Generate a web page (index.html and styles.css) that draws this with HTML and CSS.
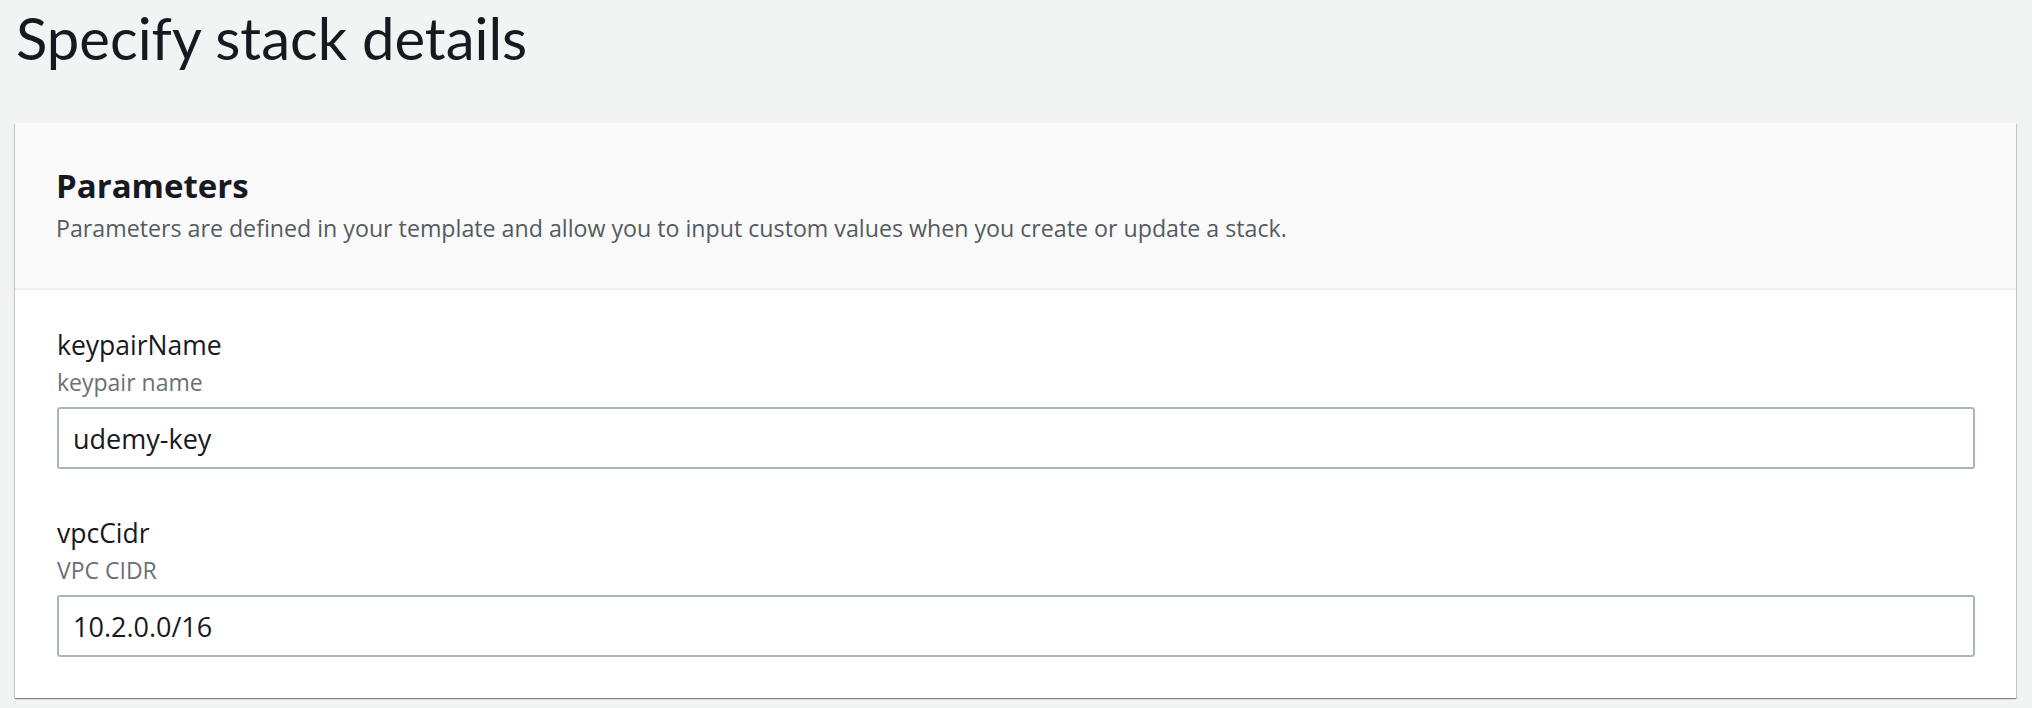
FILE: index.html
```html
<!DOCTYPE html>
<html lang="en">
<head>
<meta charset="utf-8">
<title>Specify stack details</title>
<link rel="stylesheet" href="styles.css">
</head>
<body>
<main class="page">
  <h1 class="page-title">Specify stack details</h1>
  <section class="card">
    <header class="card-header">
      <h2 class="card-title">Parameters</h2>
      <p class="card-desc">Parameters are defined in your template and allow you to input custom values when you create or update a stack.</p>
    </header>
    <div class="card-body">
      <div class="field">
        <label class="field-label" for="kp">keypairName</label>
        <div class="field-hint">keypair name</div>
        <input class="field-input" id="kp" type="text" value="udemy-key">
      </div>
      <div class="field">
        <label class="field-label" for="cidr">vpcCidr</label>
        <div class="field-hint">VPC CIDR</div>
        <input class="field-input" id="cidr" type="text" value="10.2.0.0/16">
      </div>
    </div>
  </section>
</main>
</body>
</html>
```

FILE: styles.css
```css
* { box-sizing: border-box; }
html, body { margin: 0; padding: 0; }
body {
  background: #f2f3f3;
  font-family: "Open Sans", "Noto Sans", "Liberation Sans", sans-serif;
  color: #16191f;
  width: 2032px;
  height: 708px;
  overflow: hidden;
}
.page {
  padding: 3px 16px 0 15px;
}
.page-title {
  margin: 0 0 50px 0;
  padding-left: 1px;
  font-family: Lato, "Liberation Sans", sans-serif;
  font-size: 58px;
  line-height: 70px;
  font-weight: 400;
  color: #16191f;
}
.card {
  background: #ffffff;
  box-shadow: 0 1px 1px 0 rgba(0, 28, 36, 0.3), 1px 1px 1px 0 rgba(0, 28, 36, 0.15), -1px 1px 1px 0 rgba(0, 28, 36, 0.15);
}
.card-header {
  background: #fafafa;
  border-bottom: 2px solid #eaeded;
  padding: 43px 41px 0 41px;
  height: 167px;
}
.card-title {
  margin: 0;
  font-size: 33px;
  line-height: 40px;
  font-weight: 700;
  color: #16191f;
}
.card-desc {
  margin: 8px 0 0 0;
  font-size: 23.2px;
  line-height: 28px;
  color: #545b64;
}
.card-body {
  padding: 39px 41px 41px 42px;
  display: flex;
  flex-direction: column;
  gap: 48px;
}
.field {
  display: flex;
  flex-direction: column;
}
.field-label {
  font-size: 26.5px;
  line-height: 32px;
  color: #16191f;
}
.field-hint {
  margin-top: 7px;
  font-size: 23px;
  line-height: 28px;
  color: #687078;
}
.field-input {
  margin-top: 11px;
  width: 100%;
  height: 62px;
  border: 2px solid #aab7b8;
  border-radius: 3px;
  background: #ffffff;
  padding: 0 14px;
  font-family: "Open Sans", "Noto Sans", "Liberation Sans", sans-serif;
  font-size: 27px;
  color: #16191f;
  outline: none;
}
```
